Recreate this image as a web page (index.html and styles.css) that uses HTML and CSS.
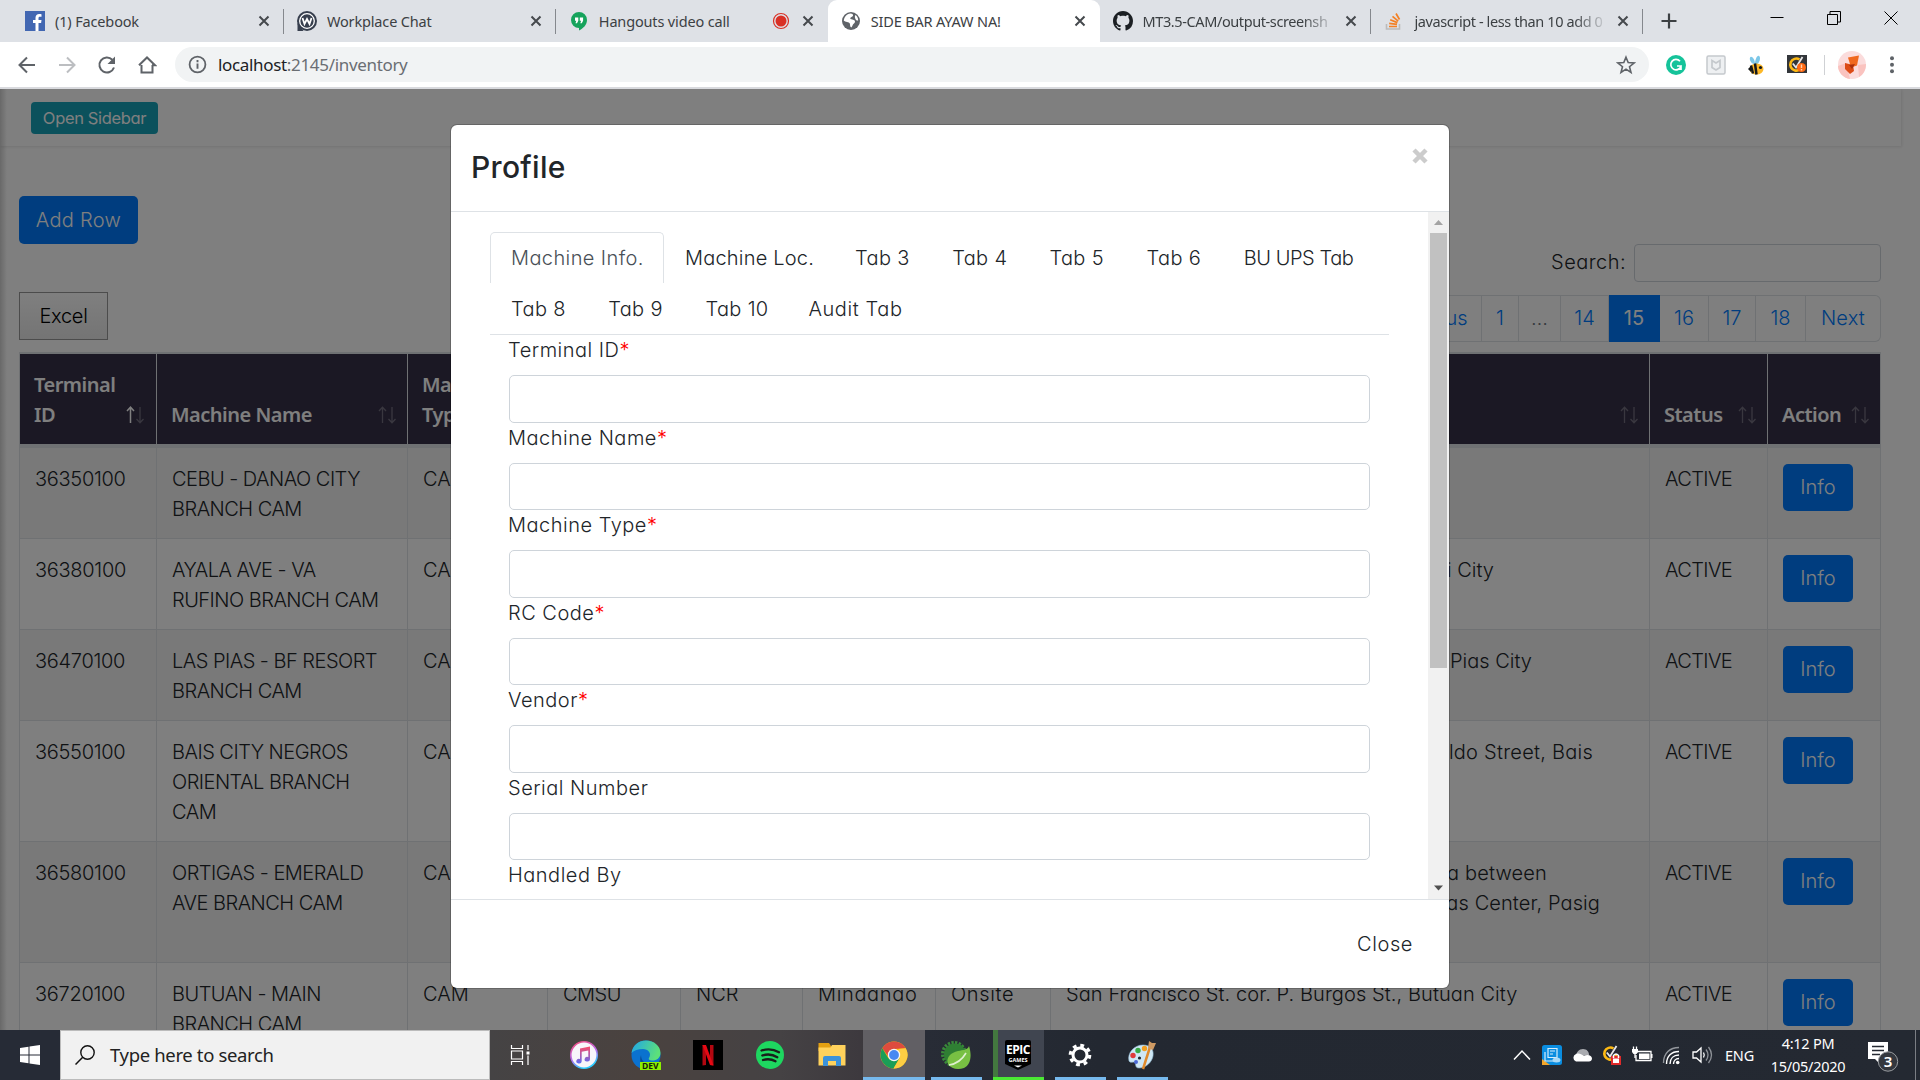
FILE: index.html
```html
<!DOCTYPE html>
<html lang="en">
<head>
<meta charset="utf-8">
<title>SIDE BAR AYAW NA!</title>
<link rel="stylesheet" href="styles.css">
</head>
<body>
<svg class="defs" aria-hidden="true">
  <symbol id="x" viewBox="0 0 12 12"><path d="M1.500 1.500l9 9M10.500 1.500l-9 9" stroke="#45494d" stroke-width="2" fill="none"/></symbol>
  <symbol id="sort" viewBox="0 0 18 18"><path d="M4.500 17V1.500M1 5l3.500-3.800L8 5" stroke="currentColor" stroke-width="1.300" fill="none"/><path d="M14 1v15.500M10.500 13l3.500 3.800L17.500 13" stroke="currentColor" stroke-width="1.300" fill="none"/></symbol>
  <symbol id="norton" viewBox="0 0 20 20"><path d="M12.500 4.500A6 6 0 1 0 15.300 10" fill="none" stroke="#fdb913" stroke-width="2.600"/><path d="M5.800 8.500l3.200 4L15.500 2" fill="none" stroke="#e8e8e8" stroke-width="1.800"/></symbol>
</svg>

<header class="browser">
  <div class="tabstrip">
    <div class="tab">
      <svg class="fav" viewBox="0 0 20 20"><path fill="#4267b2" d="M0 0h20v20H0z"/><path fill="#fff" d="M10.500 20v-8H8V9h2.500V6.800C10.500 4.300 12 3 14.200 3c1 0 2 .1 2.300.2v2.600H15c-1.300 0-1.500.6-1.500 1.500V9h3l-.4 3h-2.600v8z"/></svg>
      <span class="tab-title">(1) Facebook</span><svg class="close"><use href="#x"/></svg>
    </div>
    <div class="tab">
      <svg class="fav" viewBox="0 0 20 20"><circle cx="10" cy="10" r="10" fill="#373f4e"/><path fill="#373f4e" d="M.5 12v8h6z"/><circle cx="10" cy="10" r="7.300" fill="none" stroke="#fff" stroke-width="1.300"/><path d="M5.500 7l2 6L10 8l2.500 5 2-6" fill="none" stroke="#fff" stroke-width="1.800"/></svg>
      <span class="tab-title">Workplace Chat</span><svg class="close"><use href="#x"/></svg>
    </div>
    <div class="tab plain">
      <svg class="fav" viewBox="0 0 20 20"><path fill="#16a35c" d="M10 1a8 8 0 0 1 8 8c0 5-4 8.500-8 10.500V17A8 8 0 0 1 10 1z"/><path fill="#fff" d="M6 6.500h3.300v3.300L8 12.200H6.500l.8-2.400H6zM10.800 6.500h3.300v3.300l-1.300 2.400h-1.500l.8-2.400h-1.300z"/></svg>
      <span class="tab-title">Hangouts video call</span>
      <svg class="rec" viewBox="0 0 18 18"><circle cx="9" cy="9" r="7.500" fill="none" stroke="#d93025" stroke-width="1.200"/><circle cx="9" cy="9" r="5.500" fill="#d93025"/></svg>
      <svg class="close"><use href="#x"/></svg>
    </div>
    <div class="tab active plain">
      <svg class="fav" viewBox="0 0 20 20"><circle cx="10" cy="10" r="9" fill="#5f6368"/><path fill="#fff" d="M9.500 2.500c2 .3 3 1 2.500 2.300S9.500 6 9.300 7.300s2.700 1 4 2 .7 2.800-.6 3.400-1 2.800-2.400 3.700c-1.600-.6-1-2.600-1.500-3.900S4 10.800 2.800 9.800C3 6 5.500 3 9.500 2.500zM14.500 4c1.700 1.200 2.700 3.200 2.700 5.500-1.300.5-2.500-.6-2.900-1.800s-.8-2.500.2-3.700z"/></svg>
      <span class="tab-title">SIDE BAR AYAW NA!</span><svg class="close"><use href="#x"/></svg>
    </div>
    <div class="tab">
      <svg class="fav" viewBox="0 0 16 16"><path fill="#1b1f23" d="M8 0C3.580 0 0 3.580 0 8c0 3.540 2.290 6.530 5.470 7.590.4.070.55-.17.55-.38 0-.19-.01-.82-.01-1.490-2.010.37-2.530-.49-2.690-.94-.09-.23-.48-.94-.82-1.130-.28-.15-.68-.52-.01-.53.63-.01 1.080.58 1.230.82.72 1.210 1.870.87 2.330.66.070-.52.28-.87.51-1.070-1.780-.2-3.640-.89-3.640-3.950 0-.87.31-1.590.82-2.150-.08-.2-.36-1.020.08-2.120 0 0 .67-.21 2.200.82.64-.18 1.320-.27 2-.27s1.360.09 2 .27c1.530-1.040 2.200-.82 2.200-.82.44 1.100.16 1.920.08 2.120.51.56.82 1.270.82 2.150 0 3.070-1.870 3.750-3.650 3.950.29.25.54.73.54 1.480 0 1.070-.01 1.930-.01 2.200 0 .21.150.46.55.38A8.010 8.010 0 0 0 16 8c0-4.420-3.580-8-8-8z"/></svg>
      <span class="tab-title fade">MT3.5-CAM/output-screensh</span><svg class="close"><use href="#x"/></svg>
    </div>
    <div class="tab">
      <svg class="fav" viewBox="0 0 20 20"><path d="M2.500 13v5h13v-5" fill="none" stroke="#bcbbbb" stroke-width="1.600"/><path d="M5 15.500h8M5.200 12.300l7.800 1M6.200 8.800l7.200 2.800M8.500 5.300l5.700 4.800M12 2.500l3.500 6" stroke="#f48024" stroke-width="1.700"/></svg>
      <span class="tab-title fade">javascript - less than 10 add 0</span><svg class="close"><use href="#x"/></svg>
    </div>
    <svg class="newtab" viewBox="0 0 16 16"><path d="M8 .5v15M.5 8h15" stroke="#3c4043" stroke-width="2.200"/></svg>
    <div class="winctl">
      <svg viewBox="0 0 14 14"><path d="M.5 6.500h13" stroke="#000"/></svg>
      <svg viewBox="0 0 14 14"><path d="M.5 3.500h10v10H.5zM3 3.500V.5h10.500V11H11" stroke="#000" fill="none"/></svg>
      <svg viewBox="0 0 14 14"><path d="M.5.500l13 13M13.500.500l-13 13" stroke="#000"/></svg>
    </div>
  </div>
  <div class="toolbar">
    <nav class="navbtns">
      <svg viewBox="0 0 20 20"><path d="M18 10H3M10 2.500L2.500 10l7.500 7.500" stroke="#5f6368" stroke-width="2" fill="none"/></svg>
      <svg viewBox="0 0 20 20"><path d="M2 10h15M10 2.500l7.500 7.500-7.500 7.500" stroke="#bcbec1" stroke-width="2" fill="none"/></svg>
      <svg viewBox="0 0 20 20"><path d="M17 12.500A7.500 7.500 0 1 1 15.300 4.700" stroke="#5f6368" stroke-width="2" fill="none"/><path d="M18 1.500V9h-7.500z" fill="#5f6368"/></svg>
      <svg viewBox="0 0 20 20"><path d="M4.500 10v7.500h11V10M2 10.200L10 2.500l8 7.700h-3" stroke="#5f6368" stroke-width="2" fill="none"/></svg>
    </nav>
    <div class="omnibox">
      <svg class="info" viewBox="0 0 18 18"><circle cx="9" cy="9" r="7.500" stroke="#5f6368" stroke-width="1.700" fill="none"/><path d="M9 8v5M9 4.800v2" stroke="#5f6368" stroke-width="1.800"/></svg>
      <span class="url"><b>localhost</b>:2145/inventory</span>
      <svg class="star" viewBox="0 0 20 20"><path d="M10 2.200l2.200 5.400 5.800.4-4.500 3.700 1.500 5.700-5-3.200-5 3.200 1.500-5.700L2 8l5.800-.4z" stroke="#5f6368" stroke-width="1.600" fill="none"/></svg>
    </div>
    <div class="exts">
      <svg viewBox="0 0 20 20"><circle cx="10" cy="10" r="10" fill="#15c39a"/><path d="M14 6.300A5.200 5.200 0 1 0 15 11h-4M15 10.500V15" stroke="#fff" stroke-width="1.700" fill="none"/></svg>
      <svg viewBox="0 0 20 20"><rect x="1" y="1" width="18" height="18" rx="1.500" fill="#eef0f2" stroke="#c5c9cd" stroke-width="1.500"/><path d="M6 5.500v7l4 2.500 4-2.500v-7L10 8z" stroke="#c5c9cd" stroke-width="1.700" fill="none"/></svg>
      <svg viewBox="0 0 20 20"><path d="M8 9C4 8 3 3 4.500 2S9 4 9 9c0-4 2-9 4-8s1 7-3 9z" fill="#7cc7e8"/><ellipse cx="10.500" cy="14" rx="7" ry="5.500" fill="#fdb827"/><path d="M5 10.500l2 8M9 8.500l1.500 11" stroke="#15191d" stroke-width="2.500"/><path d="M5 11l-3 3 3 3z" fill="#15191d"/><circle cx="14.500" cy="12.500" r="1.600" fill="#15191d"/></svg>
      <svg viewBox="0 0 20 20"><path fill="#33363a" d="M0 0h20v18H0z"/><use href="#norton"/><circle cx="14.500" cy="12.500" r="4.500" fill="#ff6a13"/><path d="M14.500 9.500v3.500M14.500 14v1.500" stroke="#ffd2b0" stroke-width="1.400"/></svg>
    </div>
    <i class="tsep"></i>
    <svg class="avatar" viewBox="0 0 28 28"><circle cx="14" cy="14" r="14" fill="#fbdcdc"/><path fill="#fac3bf" d="M0 15l8-3 4 16C5 27 0 21 0 15zM20 14l8-1c0 6-3 11-7 13z"/><path fill="#f0691f" d="M10 6.500l11-2-2 10-6 2z"/><path fill="#dc4b16" d="M7 12l8 2 1 6-4 3-5-5z"/><path fill="#a9300c" d="M11 14l6-1-3 5z"/></svg>
    <svg class="dots" viewBox="0 0 6 20"><circle cx="3" cy="3.200" r="2"/><circle cx="3" cy="9.700" r="2"/><circle cx="3" cy="16.200" r="2"/></svg>
  </div>
</header>

<main class="viewport">
  <div class="page">
    <div class="topnav"><button class="btn-info">Open Sidebar</button></div>
    <button class="btn add">Add Row</button>
    <div class="search"><label>Search:</label><input type="text"></div>
    <div class="controls">
      <button class="excel">Excel</button>
      <div class="pager">
        <span class="p-prev">Previous</span><span class="p-1">1</span><span class="p-dots">…</span><span class="p-14">14</span><span class="p-on">15</span><span class="p-16">16</span><span class="p-17">17</span><span class="p-18">18</span><span class="p-next">Next</span>
      </div>
    </div>
    <div class="table">
      <div class="row head">
        <div>Terminal<br>ID<svg class="sort on" viewBox="0 0 18 18"><path d="M4.500 17V1.500M1 5l3.500-3.800L8 5" stroke="#fff" stroke-width="1.500" fill="none"/><path d="M14 1v15.500M10.500 13l3.500 3.800L17.500 13" stroke="#fff" stroke-width="1.300" fill="none" opacity=".3"/></svg></div>
        <div>Machine Name<svg class="sort"><use href="#sort"/></svg></div>
        <div>Machine<br>Type</div><div></div><div></div><div></div><div></div>
        <div><svg class="sort"><use href="#sort"/></svg></div>
        <div>Status<svg class="sort"><use href="#sort"/></svg></div>
        <div>Action<svg class="sort"><use href="#sort"/></svg></div>
      </div>
      <div class="row odd"><div class="id">36350100</div><div class="name">CEBU - DANAO CITY<br>BRANCH CAM</div><div>CAM</div><div></div><div></div><div></div><div></div><div></div><div class="status">ACTIVE</div><div class="act"><button class="btn">Info</button></div></div>
      <div class="row"><div class="id">36380100</div><div class="name">AYALA AVE - VA<br>RUFINO BRANCH CAM</div><div>CAM</div><div></div><div></div><div></div><div></div><div><p class="a2">Makati City</p></div><div class="status">ACTIVE</div><div class="act"><button class="btn">Info</button></div></div>
      <div class="row odd"><div class="id">36470100</div><div class="name">LAS PIAS - BF RESORT<br>BRANCH CAM</div><div>CAM</div><div></div><div></div><div></div><div></div><div><p class="a3">Las Pias City</p></div><div class="status">ACTIVE</div><div class="act"><button class="btn">Info</button></div></div>
      <div class="row tall"><div class="id">36550100</div><div class="name">BAIS CITY NEGROS<br>ORIENTAL BRANCH<br>CAM</div><div>CAM</div><div></div><div></div><div></div><div></div><div><p class="a4">ldo Street, Bais</p></div><div class="status">ACTIVE</div><div class="act"><button class="btn">Info</button></div></div>
      <div class="row odd tall"><div class="id">36580100</div><div class="name">ORTIGAS - EMERALD<br>AVE BRANCH CAM</div><div>CAM</div><div></div><div></div><div></div><div></div><div><p class="a5">a between</p><p class="a6">Ortigas Center, Pasig</p></div><div class="status">ACTIVE</div><div class="act"><button class="btn">Info</button></div></div>
      <div class="row"><div class="id">36720100</div><div class="name">BUTUAN - MAIN<br>BRANCH CAM</div><div>CAM</div><div class="name">CMSU</div><div>NCR</div><div class="loose">Mindanao</div><div class="loose">Onsite</div><div class="addr">San Francisco St. cor. P. Burgos St., Butuan City</div><div class="status">ACTIVE</div><div class="act"><button class="btn">Info</button></div></div>
    </div>
  </div>

  <div class="backdrop">
    <section class="modal">
      <div class="modal-head"><h4>Profile</h4><svg viewBox="0 0 16 16"><path d="M2 2l12 12M14 2L2 14" stroke="#ccc" stroke-width="4.500"/></svg></div>
      <div class="modal-body">
        <div class="content">
          <ul class="tabs">
            <li class="on">Machine Info.</li><li class="loc">Machine Loc.</li><li>Tab 3</li><li>Tab 4</li><li>Tab 5</li><li>Tab 6</li><li class="ups">BU UPS Tab</li>
            <li>Tab 8</li><li>Tab 9</li><li class="ten">Tab 10</li><li class="audit">Audit Tab</li>
          </ul>
          <form class="fields">
            <label>Terminal ID<em>*</em></label><input type="text">
            <label>Machine Name<em>*</em></label><input type="text">
            <label>Machine Type<em>*</em></label><input type="text">
            <label>RC Code<em>*</em></label><input type="text">
            <label>Vendor<em>*</em></label><input type="text">
            <label>Serial Number</label><input type="text">
            <label>Handled By</label>
          </form>
        </div>
        <div class="scroll">
          <svg viewBox="0 0 21 21"><path d="M6 13h9l-4.500-5z" fill="#a3a3a3"/></svg>
          <i class="thumb"></i>
          <svg viewBox="0 0 21 21"><path d="M6 7.500h9l-4.500 5z" fill="#505050"/></svg>
        </div>
      </div>
      <div class="modal-foot">Close</div>
    </section>
  </div>
</main>

<footer class="taskbar">
  <div class="start"><svg viewBox="0 0 20 20"><path fill="#fff" d="M0 3l8.500-1.200v7.700H0zM9.500 1.600L20 0v9.500H9.500zM0 10.500h8.500v7.700L0 17zM9.500 10.500H20V20L9.500 18.500z"/></svg></div>
  <div class="tsearch"><svg viewBox="0 0 20 20"><circle cx="12.500" cy="7.500" r="6.700" fill="none" stroke="#111" stroke-width="1.400"/><path d="M7.700 12.300L.5 19.500" stroke="#111" stroke-width="1.500"/></svg>Type here to search</div>
  <div class="task view"><svg viewBox="0 0 20 20"><path d="M1.500 0v3.500h11V0M1.500 6h11v8h-11zM1.500 20v-3.500h11V20M18 0v5M18 10.500V20" fill="none" stroke="#fff" stroke-width="1.200"/><path fill="#fff" d="M16.500 6.500h3v3h-3z"/></svg></div>
  <div class="apps">
    <div class="task"><svg viewBox="0 0 30 30"><defs><linearGradient id="it" x1="0" y1="0" x2=".4" y2="1"><stop offset="0" stop-color="#fa4b74"/><stop offset=".6" stop-color="#b66bf0"/><stop offset="1" stop-color="#2ccbff"/></linearGradient><linearGradient id="note" x1="0" y1="0" x2="0" y2="1"><stop offset="0" stop-color="#fb4a68"/><stop offset="1" stop-color="#5c6cf5"/></linearGradient></defs><circle cx="15" cy="15" r="13.200" fill="#f7f5fa" stroke="url(#it)" stroke-width="1.600"/><path fill="url(#note)" d="M11 8.500L21 6.500v12.800a2.700 2.300 0 1 1-1.700-2.200V10.500l-6.600 1.300v9.500A2.700 2.300 0 1 1 11 19z"/></svg></div>
    <div class="task"><svg viewBox="0 0 30 30"><defs><linearGradient id="ed" x1="0" y1="0" x2="1" y2=".3"><stop offset="0" stop-color="#1fa5ea"/><stop offset="1" stop-color="#5ce07a"/></linearGradient></defs><circle cx="15" cy="15" r="14.500" fill="#0b72cf"/><path fill="url(#ed)" d="M.5 13C1.500 5 8 .5 15 .5c8 0 14.500 5.500 14.500 12.500 0 5-4 7.500-8 7.500-3 0-4.500-1.200-3.500-2.500 3-5-1-9-6-9C7 9 3 10.500.5 13z"/><path fill="#0a4d94" d="M10 15c0 6 5 11 12 10-4 4-16 3-12-10z"/><path fill="#8cf000" d="M9 22h21v8H9z"/><text x="11" y="29" class="dev">DEV</text></svg></div>
    <div class="task"><svg viewBox="0 0 30 30"><path d="M0 0h30v30H0z"/><path fill="#b20710" d="M9.500 5H13v20l-3.500.5zM17 5h3.500v20.500L17 25z"/><path fill="#e50914" d="M9.500 5H13l7.500 20.500L17 25z"/></svg></div>
    <div class="task"><svg viewBox="0 0 30 30"><circle cx="15" cy="15" r="14" fill="#1ed760"/><path d="M6.500 10.500c6-2 12.500-1.200 17.500 1.700M7.300 15.500c5-1.600 10.700-1 15 1.700M8 20c4.500-1.300 9-.7 12.500 1.300" fill="none" stroke="#191f1b" stroke-width="2.300" stroke-linecap="round"/></svg></div>
    <div class="task"><svg viewBox="0 0 30 30"><path fill="#e3a012" d="M1.500 3H12l2 3v5H1.500z"/><path fill="#ffd25c" d="M1.500 7.500h12L15 5h13.500v20.500h-27z"/><path fill="#3c92d9" d="M6 26V18q0-2 2-2h14q2 0 2 2v8h-5v-5h-8v5z"/></svg></div>
    <div class="task current"><svg viewBox="0 0 30 30"><circle cx="15" cy="15" r="13.500" fill="#fbbc05"/><path fill="#de4b3e" d="M3.300 8.300A13.500 13.500 0 0 1 26.700 8.300L15 9l-6 7z"/><path fill="#1b9e57" d="M3.300 8.300A13.500 13.500 0 0 0 14.500 28.500L20.500 18 9.500 18.500z"/><path fill="#fccd43" d="M26.700 8.300A13.500 13.500 0 0 1 14.500 28.500L20.700 18.300 19.500 9z"/><circle cx="15" cy="15" r="6.200" fill="#f5f5f5"/><circle cx="15" cy="15" r="4.900" fill="#4688f1"/></svg></div>
    <div class="task open"><svg viewBox="0 0 30 30"><circle cx="13" cy="14" r="11" fill="none" stroke="#3a8a3a" stroke-width="4" stroke-dasharray="2.200 1.300"/><circle cx="14" cy="14.500" r="11" fill="#2f7f33"/><path fill="#78c043" d="M28 6c-1 4-6 4-11 5C8 13 5 19 7 24c3 5 10 6 16 4 7-3 8-13 5-22z"/><path d="M8 25c7-1 13-5 17-12" stroke="#dff0d0" stroke-width="1.600" fill="none"/></svg></div>
    <div class="task open epic"><svg viewBox="0 0 30 30"><path d="M4 0h22q2 0 2 2v22l-13 6-13-6V2q0-2 2-2z"/><text x="15" y="14" class="ep">EPIC</text><text x="15" y="21.500" class="gm">GAMES</text><path fill="#fff" d="M11 25.500h8L15 27.500z"/></svg></div>
    <div class="task open"><svg viewBox="0 0 30 30"><circle cx="15" cy="15" r="7" fill="none" stroke="#fff" stroke-width="3"/><circle cx="15" cy="15" r="9.700" fill="none" stroke="#fff" stroke-width="3.200" stroke-dasharray="3.800 3.818"/></svg></div>
    <div class="task open"><svg viewBox="0 0 30 30"><path fill="#cfe7f5" stroke="#8fb9d2" stroke-width=".6" d="M2 21C0 13 7 5 16 5c8 0 11 5 10 11s-7 12-14 12c-5 0-2-5-5-6-2 0-4 1-5-1z"/><circle cx="6" cy="15.500" r="2.700" fill="#e03a3a"/><circle cx="11" cy="10.500" r="2.700" fill="#38a845"/><circle cx="17.500" cy="8.500" r="2.700" fill="#f2a023"/><circle cx="12.500" cy="18" r="1.600" fill="#22272f"/><circle cx="9" cy="22" r="2" fill="#4a67d6"/><path d="M16 29l7-22" stroke="#e08a2c" stroke-width="2.500"/><path fill="#cf9a63" d="M21 8l1-7 3 2 4 0-3 7z"/></svg></div>
  </div>
  <div class="tray">
    <svg viewBox="0 0 24 24"><path d="M4 16.500L12 8l8 8.500" stroke="#fff" stroke-width="1.500" fill="none"/></svg>
    <svg viewBox="0 0 24 24"><rect x="2" y="2" width="20" height="20" rx="2.500" fill="#0a8de0"/><path d="M2 22v-6l8 6z" fill="#f4a62a"/><path d="M8 5.500h9v9H8zM5 9v9h9M10 8h5M10 11h3" fill="none" stroke="#d5edfb" stroke-width="1.200"/><ellipse cx="16.500" cy="17" rx="4" ry="2.500" fill="#a9d8f5"/></svg>
    <svg viewBox="0 0 24 24"><path fill="#a9abb0" d="M6 14c0-5 3-8 7-8s6 3 6 6z"/><path fill="#fff" d="M6 18.500a4 4 0 0 1 0-7.500c3-1 5 0 8 2 3-2 8-1 8 2.500 0 2-1.500 3-3 3z"/></svg>
    <svg viewBox="0 0 24 24"><g transform="translate(1 1)"><path d="M12.500 4.500A6 6 0 1 0 15.300 10" fill="none" stroke="#fdb913" stroke-width="2.600"/><path d="M5.800 8.500l3.200 4L15.500 2" fill="none" stroke="#e8e8e8" stroke-width="1.800"/></g><path fill="#e02a2a" d="M11 13h10v9H11z"/><path d="M13.500 15v-2.500q2.500-3 5 0V15" stroke="#fff" stroke-width="1.500" fill="none"/><path fill="#fff" d="M13 15.500h6v4.500h-6z"/></svg>
    <svg viewBox="0 0 24 24"><path d="M7 8.500h14v9H6V12" stroke="#fff" stroke-width="1.300" fill="none"/><path fill="#fff" d="M9 10.500h10.500v5.500H9zM21 11h1.500v4H21zM2 6h6v3L6.500 11h-3L2 9z"/><path d="M3.500 3.500V6M6.500 3.500V6M5 11v4" stroke="#fff" stroke-width="1.300"/></svg>
    <svg viewBox="0 0 24 24"><g fill="none" stroke="#fff" stroke-width="1.400"><path d="M3.500 20C3.500 10 10 4.500 19 4.500" stroke="#92969c"/><path d="M6.500 21c0-8 5-12.500 12.500-12.500M10 21c0-5.500 3.500-9 9-9M13.500 21c0-3 2-5.500 5.500-5.500"/></g><circle cx="17.700" cy="19.500" r="1.800" fill="#fff"/></svg>
    <svg viewBox="0 0 24 24"><path d="M3 9h3.500L11 5v14l-4.500-4H3z" stroke="#fff" stroke-width="1.300" fill="none"/><path d="M13.500 9.500q1.500 2.500 0 5" stroke="#fff" stroke-width="1.300" fill="none"/><path d="M16 6.500q4 5.500 0 11M18.500 4q6 8 0 16" stroke="#8d9197" stroke-width="1.300" fill="none"/></svg>
    <span class="lang">ENG</span>
    <span class="clock">4:12 PM<br>15/05/2020</span>
    <svg class="notif" viewBox="0 0 34 34"><path fill="#fff" d="M2 3h20v17h-8v5l-5-5H2z"/><path d="M6 7.500h12M6 11.500h12M6 15.500h8" stroke="#242932" stroke-width="1.300"/><circle cx="22" cy="22.500" r="9.700" fill="#33373e" stroke="#9a9da1" stroke-width="1"/><text x="22" y="28" class="badge">3</text></svg>
    <i class="peek"></i>
  </div>
</footer>
</body>
</html>
```
FILE: styles.css
```css
* { box-sizing: border-box; }
body {
  margin: 0; width: 1920px; height: 1080px; overflow: hidden;
  display: flex; flex-direction: column;
  font: 300 20px/30px Inter, "Open Sans", sans-serif;
  font-feature-settings: "cv11";
  color: #212529; background: #fff;
}
button, input { font: inherit; font-feature-settings: inherit; letter-spacing: inherit; margin: 0; }
p { margin: 0; }
.defs { display: none; }

/* Browser chrome */
.browser { height: 89px; flex: none; font-family: "Noto Sans", "Open Sans", sans-serif; font-weight: 400; border-bottom: 2px solid #d9dade; }
.tabstrip { height: 42px; background: #dee1e6; display: flex; align-items: center; padding-left: 12px; }
.tab { width: 271.900px; height: 42px; display: flex; align-items: center; padding: 0 13px; position: relative; font-size: 14.500px; color: #3c4043; letter-spacing: -.15px; }
.tab::after { content: ""; position: absolute; right: 0; top: 9px; height: 25px; width: 1px; background: #85888d; }
.tab.plain::after { display: none; }
.tab.active { background: #fff; border-radius: 9px 9px 0 0; }
.fav { width: 20px; height: 20px; flex: none; margin-right: 10px; }
.tab-title { flex: 1; white-space: nowrap; overflow: hidden; padding-bottom: 1px; }
.tab-title.fade { letter-spacing: -.4px; -webkit-mask-image: linear-gradient(90deg, #000 82%, transparent); mask-image: linear-gradient(90deg, #000 82%, transparent); }
.close { width: 12px; height: 12px; margin: 0 1px 0 8px; flex: none; }
.rec { width: 18px; height: 18px; margin-right: 4px; }
.newtab { width: 16px; height: 16px; margin-left: 18px; }
.winctl { display: flex; gap: 43px; margin: -6px 22px 0 auto; }
.winctl svg { width: 14px; height: 14px; }
.toolbar { height: 45px; display: flex; align-items: center; background: #fff; }
.navbtns { display: flex; gap: 20px; padding-left: 17px; width: 175px; flex: none; }
.navbtns svg { width: 20px; height: 20px; }
.omnibox { width: 1474px; height: 35px; border-radius: 18px; background: #f1f3f4; display: flex; align-items: center; padding: 0 13px; }
.info { width: 19px; height: 19px; margin-right: 11px; }
.url { font-size: 17px; letter-spacing: -.33px; color: #6a6e73; flex: 1; }
.url b { font-weight: 400; color: #202124; }
.star { width: 20px; height: 20px; }
.exts { display: flex; gap: 20.200px; margin-left: 17px; }
.exts svg { width: 20px; height: 20px; }
.tsep { width: 1px; height: 20px; background: #cfd1d4; margin-left: 17px; }
.avatar { width: 28px; height: 28px; margin-left: 13px; }
.dots { width: 6px; height: 20px; margin-left: 23px; fill: #5f6368; }

/* Inventory page */
.viewport { height: 941px; position: relative; overflow: hidden; }
.page { height: 1100px; padding: 0 39px 0 19px; background: linear-gradient(90deg, #d2d2d2, #fff 7px); }
.topnav { height: 57px; margin: 0 0 50px -19px; width: 1901px; padding: 13px 0 0 31px; box-shadow: 1px 1px 3px rgba(0,0,0,.1); }
.btn-info { display: block; width: 127px; height: 32px; padding: 0; border: 0; border-radius: 4px; background: #17a2b8; color: #fff; font-size: 16.500px; line-height: 30px; font-weight: 400; letter-spacing: -.35px; }
.btn { border: 0; border-radius: 5px; background: #007bff; color: #fff; height: 47px; padding: 0 0 2px; }
.btn.add { display: block; width: 119px; height: 48px; padding: 0; letter-spacing: .3px; }
.search { display: flex; justify-content: flex-end; align-items: center; gap: 8px; height: 38px; letter-spacing: .45px; }
.search label { padding-bottom: 2px; }
.search input { width: 247px; height: 38px; border: 1px solid #ced4da; border-radius: 4px; }
.controls { display: flex; justify-content: space-between; height: 70px; padding-top: 10px; }
.excel { width: 89px; height: 48px; border: 1px solid #999; background: linear-gradient(#fff, #e9e9e9); color: #000; padding: 0; letter-spacing: -.3px; }
.pager { display: flex; height: 48px; margin-top: 3px; color: #007bff; }
.pager span { border: 1px solid #dee2e6; border-left-width: 0; height: 47px; line-height: 44px; text-align: center; }
.pager .p-prev { width: 109px; border-left-width: 1px; }
.pager .p-1 { width: 37px; }
.pager .p-dots { width: 42px; color: #6c757d; }
.pager .p-14 { width: 48px; }
.pager .p-on { width: 51px; background: #007bff; border-color: #007bff; color: #fff; font-weight: 400; }
.pager .p-16 { width: 49px; }
.pager .p-17 { width: 47px; }
.pager .p-18 { width: 50px; }
.pager .p-next { width: 75px; border-radius: 0 6px 6px 0; letter-spacing: .2px; }

.table { width: 1862px; border-top: 2px solid #dee2e6; }
.row { display: grid; grid-template-columns: 137px 251px 140px 133px 122px 133px 115px 599px 118px 114px; height: 91px; border-bottom: 1px solid #dee2e6; }
.row > div { border-left: 1px solid #dee2e6; padding: 16px 0 0 15px; white-space: nowrap; }
.row > div:last-child { border-right: 1px solid #dee2e6; }
.row.tall { height: 121px; }
.row.odd { background: rgba(0,0,0,.05); }
.row .id { letter-spacing: -.3px; }
.row .name { letter-spacing: -.52px; }
.row .status { letter-spacing: -.6px; }
.row .loose { letter-spacing: .65px; }
.row .addr { letter-spacing: .08px; }
.row.head { height: 94px; border-bottom: 4px solid #dee2e6; background: #363048; color: #fff; font-family: "Noto Sans", sans-serif; font-weight: 600; letter-spacing: -.5px; }
.row.head > div { padding: 0 15px 14px 14px; display: flex; align-items: flex-end; position: relative; }
.sort { width: 18px; height: 18px; opacity: .3; position: absolute; right: 11px; bottom: 20px; }
.sort.on { opacity: 1; right: 12px; }
.act .btn { width: 70px; display: block; }
.row p { text-align: right; }
.a2 { width: 428px; } .a3 { width: 466px; } .a4 { width: 527px; letter-spacing: .25px; } .a5 { width: 481px; letter-spacing: .15px; } .a6 { width: 534px; letter-spacing: .1px; }

/* Modal */
.backdrop { position: absolute; inset: 0; background: rgba(0,0,0,.5); padding-top: 35px; padding-left: 450px; }
.modal { width: 1000px; height: 865px; background: #fff; background-clip: padding-box; border: 1px solid rgba(0,0,0,.2); border-radius: 7px; display: flex; flex-direction: column; }
.modal-head { height: 87px; border-bottom: 1px solid #dee2e6; padding: 22px 21px 0 20px; display: flex; justify-content: space-between; }
.modal-head h4 { margin: 0; font-size: 30px; line-height: 40px; font-weight: 450; letter-spacing: .3px; }
.modal-head svg { width: 16px; height: 16px; margin-top: 1px; }
.modal-body { height: 687px; display: flex; overflow: hidden; }
.content { width: 977px; padding: 20px 39px 0; }
.tabs { list-style: none; margin: 0; padding: 0; height: 103px; border-bottom: 1px solid #dee2e6; display: flex; flex-wrap: wrap; align-content: flex-start; letter-spacing: .35px; }
.tabs li { width: 97.200px; height: 51px; padding: 11px 0 0 21px; white-space: nowrap; }
.tabs .on { width: 174px; padding: 10px 0 0 20px; border: 1px solid #dee2e6; border-bottom: 0; border-radius: 5px 5px 0 0; color: #495057; letter-spacing: .4px; }
.tabs .loc { width: 170px; letter-spacing: .2px; } .tabs .ups { width: 150px; letter-spacing: -.45px; } .tabs .ten { width: 103px; } .tabs .audit { width: 140px; letter-spacing: .6px; }
.fields { display: flex; flex-direction: column; padding: 0 19px; letter-spacing: .5px; }
.fields label { height: 30px; flex: none; margin-left: -1px; }
.fields em { color: red; font-style: normal; }
.fields input { margin-top: 10px; height: 47.500px; border: 1px solid #ced4da; border-radius: 5px; flex: none; }
.scroll { width: 21px; background: #f1f1f1; display: flex; flex-direction: column; }
.scroll svg { width: 21px; height: 21px; }
.thumb { width: 17px; height: 435px; margin: 0 2px auto; background: #c1c1c1; }
.modal-foot { flex: 1; border-top: 1px solid #dee2e6; text-align: right; padding: 29px 36px 0 0; letter-spacing: .6px; }

/* Taskbar */
.taskbar { height: 50px; flex: none; display: flex; background: linear-gradient(90deg, #262b36 0, #262b36 60px, #454344 490px, #4a423f 640px, #454244 780px, #3d393e 860px, #282c36 925px, #232831 1100px, #242932 100%); color: #fff; font-family: "Noto Sans", "Open Sans", sans-serif; font-weight: 400; }
.start { width: 60px; padding: 15px 0 0 20px; line-height: 0; }
.start svg { width: 20px; height: 20px; }
.tsearch { width: 430px; background: #f1f1f1; border: 1px solid #bbb; color: #222; font-size: 18.500px; letter-spacing: -.35px; display: flex; align-items: center; gap: 15px; padding-left: 14px; }
.tsearch svg { width: 20px; height: 20px; }
.task { width: 62px; display: flex; align-items: center; justify-content: center; }
.task svg { width: 30px; height: 30px; }
.task.view { padding-right: 2px; }
.task.view svg { width: 20px; height: 20px; }
.apps { display: flex; width: 955px; padding-left: 1px; }
.task.current { background: #615f64; border-bottom: 3px solid #76b9ed; }
.task.open { width: 51px; margin: 0 5.500px; border-bottom: 3px solid #76b9ed; }
.task.epic { background: #404550; border-bottom-color: #4be834; box-shadow: inset 5px 0 #43783f; }
.current svg, .open svg { margin-top: 3px; }
.dev { font: 700 8.500px "Open Sans", sans-serif; fill: #15200a; }
.ep { font: 700 12px "Open Sans", sans-serif; fill: #fff; text-anchor: middle; letter-spacing: -.5px; }
.gm { font: 700 5.500px "Open Sans", sans-serif; fill: #fff; text-anchor: middle; }
.tray { display: flex; align-items: center; flex: 1; }
.tray > svg { width: 24px; height: 24px; margin: 0 3px; flex: none; }
.lang { width: 40px; padding-left: 8px; font-size: 14.500px; letter-spacing: -.2px; }
.clock { width: 102px; text-align: center; font-size: 14.500px; line-height: 23px; letter-spacing: -.25px; }
.tray .notif { width: 34px; height: 34px; margin: 2px 0 0 7px; }
.badge { font: 600 15px "Noto Sans", sans-serif; fill: #fff; text-anchor: middle; }
.peek { width: 1px; height: 50px; background: #7b7e84; margin: 0 4px 0 auto; }
```
